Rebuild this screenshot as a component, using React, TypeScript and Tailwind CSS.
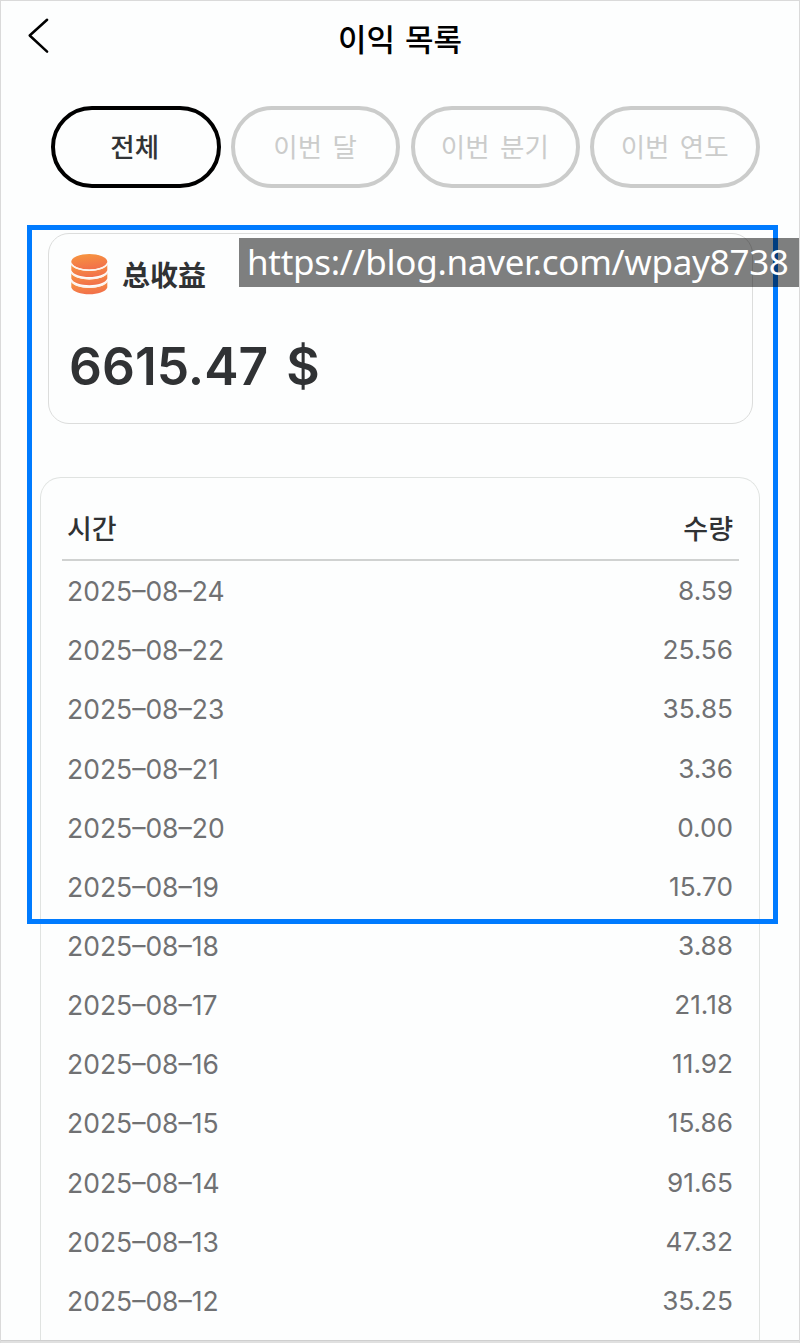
const tabs = ['전체', '이번 달', '이번 분기', '이번 연도'];

const rows: [string, string][] = [
  ['2025–08–24', '8.59'],
  ['2025–08–22', '25.56'],
  ['2025–08–23', '35.85'],
  ['2025–08–21', '3.36'],
  ['2025–08–20', '0.00'],
  ['2025–08–19', '15.70'],
  ['2025–08–18', '3.88'],
  ['2025–08–17', '21.18'],
  ['2025–08–16', '11.92'],
  ['2025–08–15', '15.86'],
  ['2025–08–14', '91.65'],
  ['2025–08–13', '47.32'],
  ['2025–08–12', '35.25'],
];

function CoinStack() {
  return (
    <svg width="38" height="42" viewBox="0 0 38 42" className="shrink-0">
      <defs>
        <linearGradient id="coin" x1="0" y1="0" x2="0.3" y2="1">
          <stop offset="0" stopColor="#f7983f" />
          <stop offset="1" stopColor="#f2724a" />
        </linearGradient>
      </defs>
      <ellipse cx="19.3" cy="8.7" rx="18" ry="7.8" fill="url(#coin)" />
      <path d="M1.3 11.6 C6 20.2 32.6 20.2 37.3 11.6 V17.2 C34.3 26.2 4.3 26.2 1.3 17.2 Z" fill="url(#coin)" />
      <path d="M1.3 20 C6 28.6 32.6 28.6 37.3 20 V25.6 C34.3 34.4 4.3 34.4 1.3 25.6 Z" fill="url(#coin)" />
      <path d="M1.3 28.4 C6 37 32.6 37 37.3 28.4 V34.4 C34.3 43.4 4.3 43.4 1.3 34.4 Z" fill="url(#coin)" />
      <path d="M1.3 10.6 C5 19.4 33.6 19.4 37.3 10.6 M1.3 19.2 C5 28 33.6 28 37.3 19.2 M1.3 27.6 C5 36.4 33.6 36.4 37.3 27.6" fill="none" stroke="#fdf3ec" strokeWidth="1.5" />
    </svg>
  );
}

export default function App() {
  return (
    <div className="relative flex h-[1343px] w-[800px] flex-col overflow-hidden border border-b-0 border-[#dadada] bg-[#fdfefe] font-['Inter','Noto_Sans_CJK_KR',sans-serif]">
      <header className="grid h-[76px] shrink-0 grid-cols-[1fr_auto_1fr] items-center">
        <button aria-label="뒤로" className="ml-[26px] mb-[6px] w-6">
          <svg width="24" height="38" viewBox="0 0 24 38" fill="none" stroke="#000" strokeWidth="2.5" strokeLinecap="round" strokeLinejoin="round">
            <path d="M20.1 2.8 L2.7 18.5 L20.1 34.6" />
          </svg>
        </button>
        <h1 className="pb-1 font-['Noto_Sans_CJK_KR',sans-serif] text-[31px] leading-none font-medium text-black [word-spacing:3px]">이익 목록</h1>
      </header>

      <nav className="mt-[29px] flex shrink-0 gap-[10.3px] pl-[50px]">
        {tabs.map((tab, i) => (
          <button
            key={tab}
            className={
              i === 0
                ? 'h-[82px] w-[169.5px] rounded-full border-4 border-black pr-0.5 text-[26.5px] leading-none font-medium text-[#323435]'
                : 'h-[82px] w-[169.5px] rounded-full border-4 border-[#cbcccb] pr-px text-[26.5px] leading-none text-[#cbcccb] [word-spacing:3px]'
            }
          >
            {tab}
          </button>
        ))}
      </nav>

      <section className="mt-[45px] ml-[47px] flex h-[191px] w-[705px] shrink-0 flex-col rounded-[21px] border border-[#dcdddc] pl-[20px]">
        <div className="mt-[19px] flex h-[42px] items-center gap-[14px] pl-px">
          <CoinStack />
          <h2 className="font-['Noto_Sans_CJK_SC',sans-serif] text-[28px] leading-none font-bold text-[#303234]">总收益</h2>
        </div>
        <p className="mt-[41px] text-[51.5px] leading-[60px] font-semibold text-[#303234] [word-spacing:5px]">6615.47 $</p>
      </section>

      <section className="mt-[53px] ml-[39px] flex w-[720px] flex-1 flex-col rounded-t-[21px] border border-b-0 border-[#e0e3e1] pr-[20px] pl-[21px]">
        <div className="flex h-[83px] shrink-0 items-end justify-between border-b-2 border-[#d0d2d1] pr-[6px] pl-[5px] pb-[16px] text-[27px] leading-none font-medium text-[#303234]">
          <span>시간</span>
          <span>수량</span>
        </div>
        {rows.map(([date, amount]) => (
          <div key={date} className="flex h-[59.17px] shrink-0 items-center justify-between pt-px pr-[6px] pl-[5px] text-[26.5px] leading-[30px] text-[#707173]">
            <span>{date}</span>
            <span className="text-[26.2px]">{amount}</span>
          </div>
        ))}
      </section>

      <div className="absolute top-[224px] left-[26px] h-[699px] w-[751px] border-[5px] border-[#007bff]" />
      <div className="absolute top-[237px] left-[238px] flex h-[49px] w-[561px] items-center bg-black/50 pb-0.5 pl-[8px] font-['Noto_Sans',sans-serif] text-[35px] leading-none tracking-[-0.29px] whitespace-nowrap text-white">
        https://blog.naver.com/wpay8738
      </div>
      <div className="absolute bottom-0 left-0 h-[3px] w-full border-t border-[#cfcfcf] bg-[#e0e0e0]" />
    </div>
  );
}
